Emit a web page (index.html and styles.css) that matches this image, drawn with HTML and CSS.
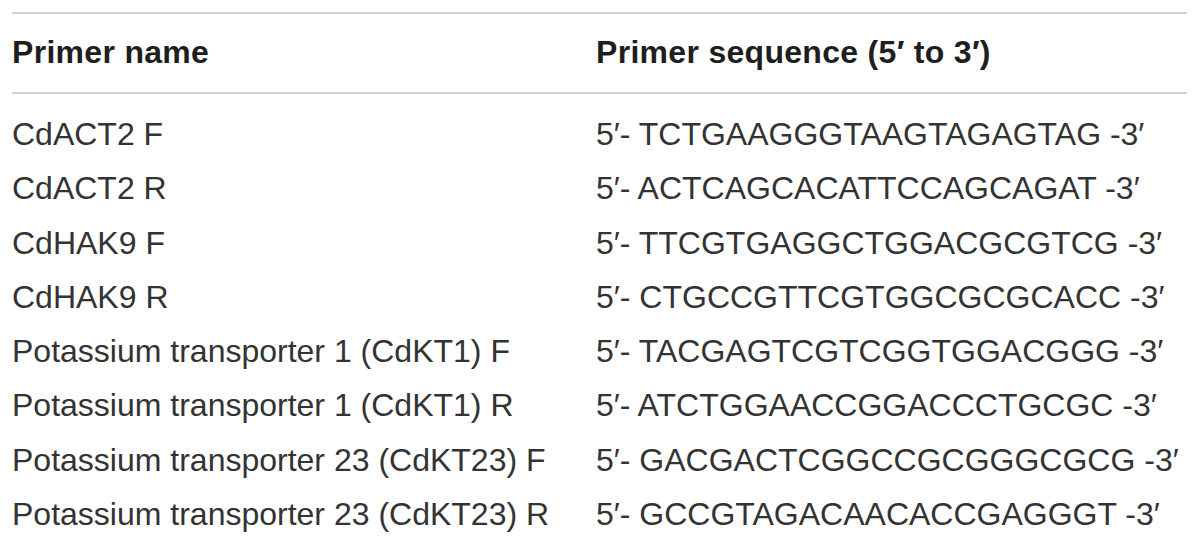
FILE: index.html
```html
<!DOCTYPE html>
<html>
<head>
<meta charset="utf-8">
<link rel="stylesheet" href="styles.css">
</head>
<body>
<div class="table">
  <div class="head">
    <div class="cell">Primer name</div>
    <div class="cell">Primer sequence (5′ to 3′)</div>
  </div>
  <div class="body">
    <div class="cell">CdACT2 F</div><div class="cell">5′- TCTGAAGGGTAAGTAGAGTAG -3′</div>
    <div class="cell">CdACT2 R</div><div class="cell">5′- ACTCAGCACATTCCAGCAGAT -3′</div>
    <div class="cell">CdHAK9 F</div><div class="cell">5′- TTCGTGAGGCTGGACGCGTCG -3′</div>
    <div class="cell">CdHAK9 R</div><div class="cell">5′- CTGCCGTTCGTGGCGCGCACC -3′</div>
    <div class="cell">Potassium transporter 1 (CdKT1) F</div><div class="cell">5′- TACGAGTCGTCGGTGGACGGG -3′</div>
    <div class="cell">Potassium transporter 1 (CdKT1) R</div><div class="cell">5′- ATCTGGAACCGGACCCTGCGC -3′</div>
    <div class="cell">Potassium transporter 23 (CdKT23) F</div><div class="cell">5′- GACGACTCGGCCGCGGGCGCG -3′</div>
    <div class="cell">Potassium transporter 23 (CdKT23) R</div><div class="cell">5′- GCCGTAGACAACACCGAGGGT -3′</div>
  </div>
</div>
</body>
</html>
```
FILE: styles.css
```css
html, body {
  margin: 0;
  padding: 0;
  background: #ffffff;
}
body {
  font-family: "Liberation Sans", Arial, sans-serif;
  color: #2b2b2b;
}
.table {
  margin: 12px 0 0 12px;
  width: 1175px;
}
.head {
  display: grid;
  grid-template-columns: 584px 1fr;
  border-top: 2px solid #d2d2d2;
  border-bottom: 2px solid #d2d2d2;
  padding: 20px 0 21px;
  font-size: 32px;
  font-weight: bold;
  line-height: 37px;
  color: #1e1e1e;
  letter-spacing: 0.3px;
}
.body {
  display: grid;
  grid-template-columns: 584px 1fr;
  padding-top: 13px;
  font-size: 32px;
  line-height: 54.3px;
  color: #333333;
}
.cell {
  white-space: nowrap;
}
```
